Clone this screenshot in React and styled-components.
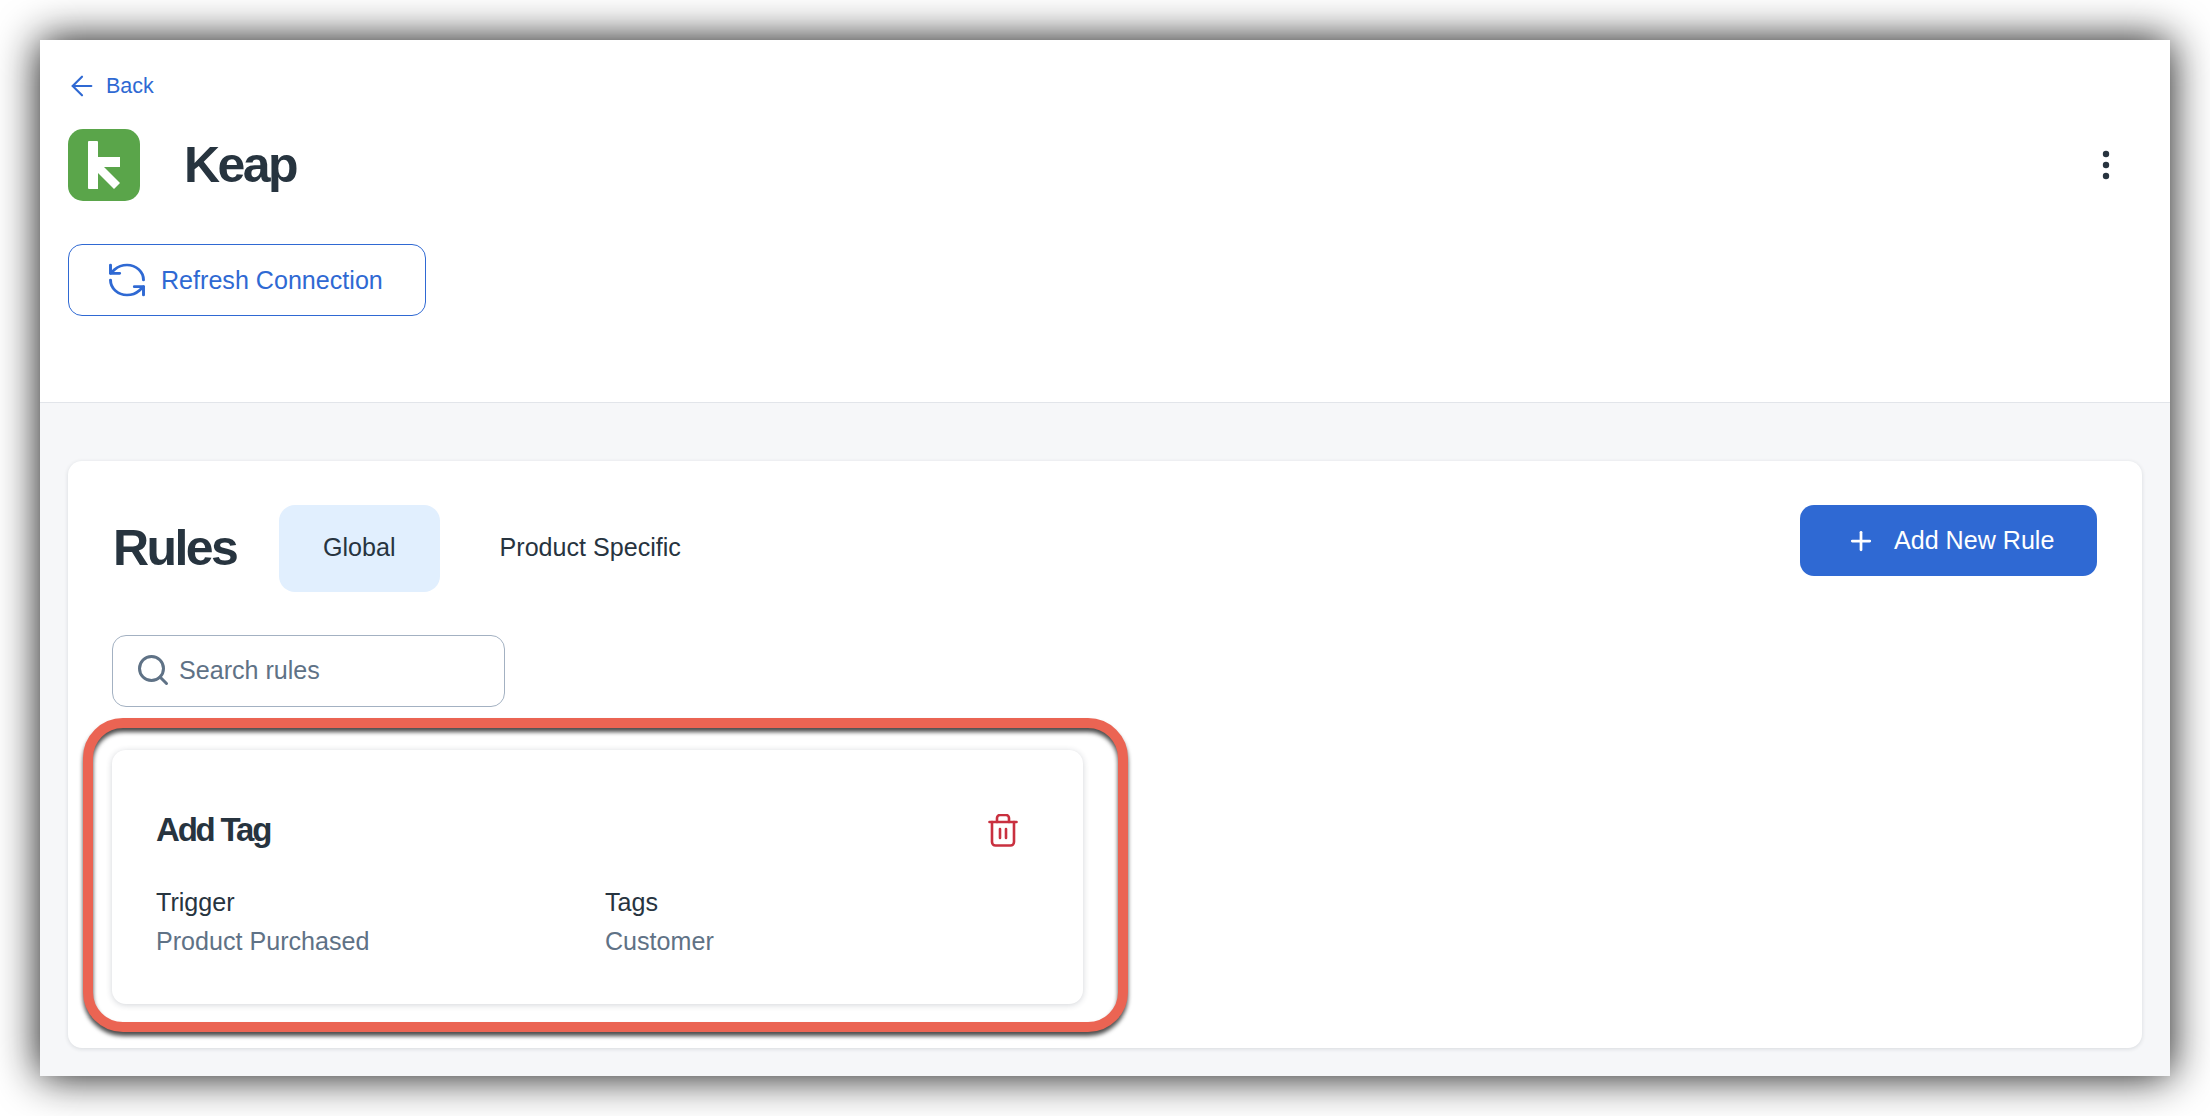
import React from 'react';
import styled, { createGlobalStyle } from 'styled-components';
import { ArrowLeft, Plus, RefreshCcw, Search } from 'lucide-react';

const GlobalStyle = createGlobalStyle`
  html, body {
    margin: 0;
    background: #fff;
  }
  body {
    font-family: "Liberation Sans", Arial, sans-serif;
    color: #27343f;
  }
  * {
    box-sizing: border-box;
  }
`;

const Page = styled.div`
  width: 2210px;
  height: 1116px;
  padding: 40px;
  overflow: hidden;
`;

const Window = styled.div`
  display: flex;
  flex-direction: column;
  height: 1036px;
  background: #f6f7f9;
  box-shadow: 0 0 40px rgba(0, 0, 0, 0.95);
`;

const Header = styled.header`
  height: 363px;
  padding: 31px 28px 0;
  background: #fff;
  border-bottom: 1px solid #e2e5ea;
`;

const BackLink = styled.a`
  display: flex;
  align-items: center;
  gap: 8px;
  height: 30px;
  margin-bottom: 28px;
  margin-left: -2px;
  font-size: 21.5px;
  color: #2f69d3;
`;

const TitleRow = styled.div`
  display: flex;
  align-items: center;
  height: 72px;
  padding-right: 20px;
  margin-bottom: 43px;
`;

const Logo = styled.svg`
  width: 72px;
  height: 72px;
  flex: none;
  margin-right: 44px;
`;

const PageTitle = styled.h1`
  flex: 1;
  margin: 0;
  font-size: 50px;
  font-weight: 700;
  letter-spacing: -2.6px;
  color: #27343f;
`;

const MoreButton = styled.svg`
  width: 32px;
  height: 32px;
`;

const OutlineButton = styled.button`
  display: flex;
  align-items: center;
  gap: 12px;
  width: 358px;
  height: 72px;
  padding: 0 0 0 36px;
  background: #fff;
  border: 1.5px solid #2f69d3;
  border-radius: 14px;
  font-family: inherit;
  font-size: 25.1px;
  color: #2f69d3;
`;

const RefreshIcon = styled(RefreshCcw)`
  width: 44px;
  height: 40px;
`;

const Body = styled.main`
  flex: 1;
  padding: 58px 28px 28px;
`;

const Panel = styled.section`
  height: 587px;
  padding: 44px 45px 44px 44px;
  background: #fff;
  border-radius: 14px;
  box-shadow: 0 1px 4px rgba(30, 40, 60, 0.14);
`;

const Toolbar = styled.div`
  display: flex;
  align-items: flex-start;
  margin-bottom: 43px;
`;

const PanelTitle = styled.h2`
  margin: 0 42px 0 1px;
  width: 124px;
  line-height: 87px;
  font-size: 50px;
  font-weight: 700;
  letter-spacing: -2.6px;
  color: #27343f;
`;

const Tab = styled.div`
  display: flex;
  align-items: center;
  height: 87px;
  padding: 0 44px 2px;
  margin-right: 16px;
  border-radius: 16px;
  font-size: 25.1px;
  color: #27343f;
  background: ${({ $active }) => ($active ? '#e1effe' : 'transparent')};
`;

const AddButton = styled.button`
  display: flex;
  align-items: center;
  gap: 18px;
  width: 297px;
  height: 71px;
  margin-left: auto;
  padding: 0 0 0 46px;
  background: #2f69d3;
  border: 0;
  border-radius: 14px;
  font-family: inherit;
  font-size: 25.1px;
  color: #fff;
`;

const SearchBox = styled.div`
  display: flex;
  align-items: center;
  gap: 8px;
  width: 393px;
  height: 72px;
  margin-bottom: 43px;
  padding: 0 0 2px 22px;
  border: 1.5px solid #a3b1c2;
  border-radius: 14px;
  font-size: 25.1px;
  color: #5f7286;
`;

const CardWrap = styled.div`
  position: relative;
  width: 971px;
`;

const RuleCard = styled.article`
  height: 254px;
  padding: 60px 45px 44px 44px;
  background: #fff;
  border-radius: 14px;
  box-shadow: 0 1px 6px rgba(30, 40, 60, 0.2);
`;

const CardHeader = styled.div`
  display: flex;
  align-items: center;
  justify-content: space-between;
  height: 40px;
  margin-bottom: 33px;
  padding-right: 20px;
`;

const CardTitle = styled.h3`
  margin: 0;
  font-size: 33px;
  font-weight: 700;
  letter-spacing: -2.2px;
  color: #27343f;
`;

const TrashIcon = styled.svg`
  width: 30px;
  height: 33px;
`;

const Fields = styled.div`
  display: grid;
  grid-template-columns: 449px 1fr;
`;

const FieldLabel = styled.div`
  font-size: 25.1px;
  line-height: 39px;
  color: #27343f;
`;

const FieldValue = styled.div`
  font-size: 25.1px;
  line-height: 39px;
  color: #5f7286;
`;

/* red callout drawn over the screenshot */
const Callout = styled.div`
  position: absolute;
  top: -32px;
  right: -45px;
  bottom: -28px;
  left: -29px;
  border: 10.5px solid #eb6453;
  border-radius: 40px;
  filter: drop-shadow(0 4px 2px rgba(0, 0, 0, 0.7));
  pointer-events: none;
`;

const App = () => (
  <Page>
    <GlobalStyle />
    <Window>
      <Header>
        <BackLink>
          <ArrowLeft size={32} strokeWidth={1.6} />
          Back
        </BackLink>
        <TitleRow>
          <Logo viewBox="0 0 72 72">
            <rect width="72" height="72" rx="15" fill="#5aa54a" />
            <path d="M20 13a1 1 0 0 1 1-1h8a1 1 0 0 1 1 1v15h22v10H36l16 16-6 6-16-16v16H21a1 1 0 0 1-1-1z" fill="#fff" />
          </Logo>
          <PageTitle>Keap</PageTitle>
          <MoreButton viewBox="0 0 32 32">
            <circle cx="16" cy="5" r="3.2" fill="#27343f" />
            <circle cx="16" cy="16" r="3.2" fill="#27343f" />
            <circle cx="16" cy="27" r="3.2" fill="#27343f" />
          </MoreButton>
        </TitleRow>
        <OutlineButton>
          <RefreshIcon strokeWidth={1.6} preserveAspectRatio="none" />
          Refresh Connection
        </OutlineButton>
      </Header>
      <Body>
        <Panel>
          <Toolbar>
            <PanelTitle>Rules</PanelTitle>
            <Tab $active>Global</Tab>
            <Tab>Product Specific</Tab>
            <AddButton>
              <Plus size={30} strokeWidth={2.2} />
              Add New Rule
            </AddButton>
          </Toolbar>
          <SearchBox>
            <Search size={36} strokeWidth={2} />
            Search rules
          </SearchBox>
          <CardWrap>
            <RuleCard>
              <CardHeader>
                <CardTitle>Add Tag</CardTitle>
                <TrashIcon viewBox="0 0 30 33" fill="none" stroke="#c9303f" strokeWidth="2.6" strokeLinecap="round">
                  <path d="M1.5 8h27" />
                  <path d="M9 8V4a3 3 0 0 1 3-3h6a3 3 0 0 1 3 3v4" />
                  <path d="M4 8v20a3.500 3.500 0 0 0 3.500 3.500h15A3.500 3.500 0 0 0 26 28V8" />
                  <path d="M12 15v9M18 15v9" />
                </TrashIcon>
              </CardHeader>
              <Fields>
                <div>
                  <FieldLabel>Trigger</FieldLabel>
                  <FieldValue>Product Purchased</FieldValue>
                </div>
                <div>
                  <FieldLabel>Tags</FieldLabel>
                  <FieldValue>Customer</FieldValue>
                </div>
              </Fields>
            </RuleCard>
            <Callout />
          </CardWrap>
        </Panel>
      </Body>
    </Window>
  </Page>
);

export default App;
